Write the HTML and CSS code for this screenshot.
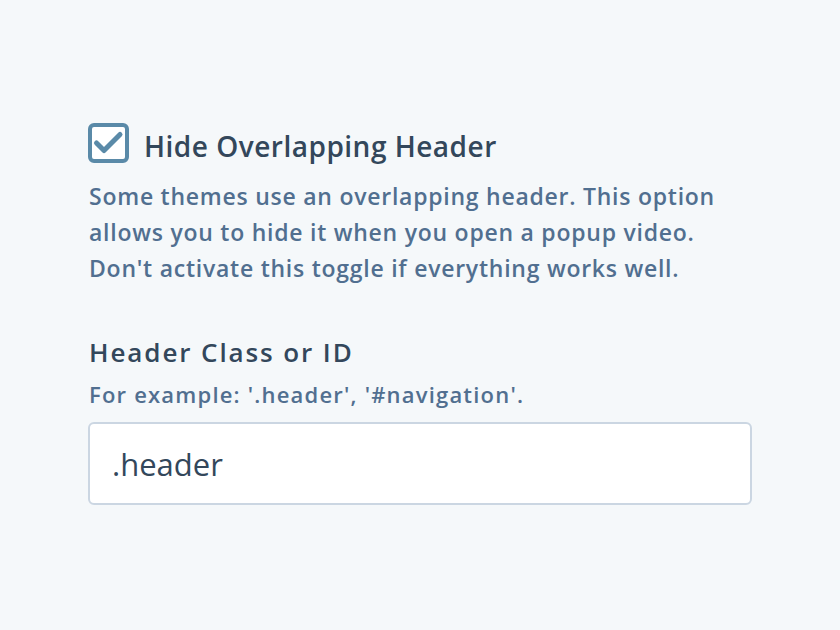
FILE: index.html
```html
<!DOCTYPE html>
<html>
<head>
<meta charset="utf-8">
<link rel="stylesheet" href="styles.css">
</head>
<body>
<main class="page">
  <section class="option">
    <label class="toggle">
      <svg class="checkbox" viewBox="0 0 41 40" width="41" height="40"><rect x="2" y="2" width="37" height="36" rx="4" fill="#fff" stroke="#5a8aa8" stroke-width="4"/><path d="M8.5 20 L16 27.5 L32 11.5" fill="none" stroke="#5a8aa8" stroke-width="5" stroke-linecap="round" stroke-linejoin="round"/></svg>
      <span class="toggle-label">Hide Overlapping Header</span>
    </label>
    <p class="help">Some themes use an overlapping header. This option<br>allows you to hide it when you open a popup video.<br>Don't activate this toggle if everything works well.</p>
  </section>
  <section class="field">
    <h2 class="field-title">Header Class or ID</h2>
    <p class="field-help">For example: '.header', '#navigation'.</p>
    <div class="input">.header</div>
  </section>
</main>
</body>
</html>
```
FILE: styles.css
```css
html, body {
  margin: 0;
  padding: 0;
  background: #f5f8fa;
}
body {
  font-family: "Open Sans", "Noto Sans", sans-serif;
  color: #33475b;
}
.page {
  padding: 123px 88px 0 88px;
  width: 664px;
}
.toggle {
  display: flex;
  align-items: flex-start;
  gap: 15px;
}
.checkbox {
  display: block;
  flex: none;
}
.toggle-label {
  margin-top: 3px;
  font-size: 28px;
  line-height: 40px;
  font-weight: 600;
  letter-spacing: 0.5px;
  color: #33475b;
}
.help {
  margin: 12px 0 0 1px;
  font-size: 23px;
  line-height: 36px;
  font-weight: 600;
  letter-spacing: 0.75px;
  color: #516f90;
  white-space: nowrap;
}
.field {
  margin-top: 49px;
  padding-left: 1px;
}
.field-title {
  margin: 0;
  font-size: 26px;
  line-height: 34px;
  font-weight: 600;
  letter-spacing: 1.9px;
  color: #33475b;
}
.field-help {
  margin: 10px 0 0;
  font-size: 22px;
  line-height: 30px;
  font-weight: 600;
  letter-spacing: 1.2px;
  color: #516f90;
}
.input {
  margin: 13px 0 0 -1px;
  height: 79px;
  border: 2px solid #cbd6e2;
  border-radius: 6px;
  background: #fff;
  display: flex;
  align-items: center;
  padding: 0 22px;
  font-size: 31px;
  color: #33475b;
}
```
